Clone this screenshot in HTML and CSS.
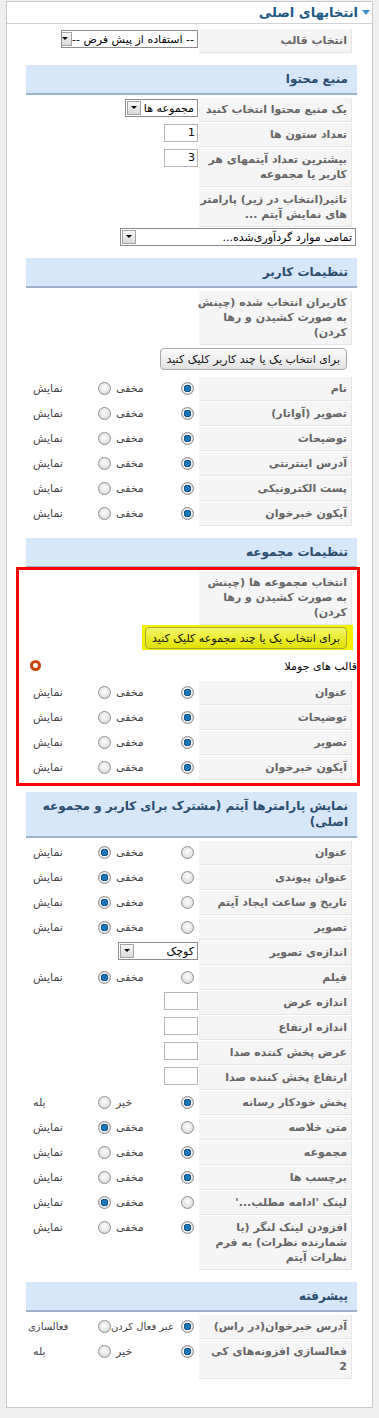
FILE: index.html
```html
<!DOCTYPE html>
<html dir="rtl">
<head>
<meta charset="utf-8">
<title>انتخابهای اصلی</title>
<link rel="stylesheet" href="styles.css">
</head>
<body>
<div class="panel">
    <div class="panel-head"><span class="tri"></span><span class="panel-title">انتخابهای اصلی</span></div>
    <div class="panel-body">

        <div class="params">
            <div class="row">
                <div class="key">انتخاب قالب</div>
                <div class="val"><div class="select" style="width:137px">-- استفاده از پیش فرض --<span class="arrow"></span></div></div>
            </div>
        </div>

        <!-- منبع محتوا -->
        <div class="section">
            <div class="section-head">منبع محتوا</div>
            <div class="params">
                <div class="row">
                    <div class="key">یک منبع محتوا انتخاب کنید</div>
                    <div class="val"><div class="select" style="width:73px">مجموعه ها<span class="arrow"></span></div></div>
                </div>
                <div class="row">
                    <div class="key">تعداد ستون ها</div>
                    <div class="val"><div class="text-input">1</div></div>
                </div>
                <div class="row">
                    <div class="key">بیشترین تعداد آیتمهای هر<br>کاربر یا مجموعه</div>
                    <div class="val"><div class="text-input">3</div></div>
                </div>
                <div class="row">
                    <div class="key">تاثیر(انتخاب در زیر) پارامتر<br>های نمایش آیتم ...</div>
                    <div class="val"></div>
                </div>
                <div class="row full">
                    <div class="select" style="width:236px">تمامی موارد گردآوری‌شده...<span class="arrow"></span></div>
                </div>
            </div>
        </div>

        <!-- تنظیمات کاربر -->
        <div class="section">
            <div class="section-head">تنظیمات کاربر</div>
            <div class="params">
                <div class="row">
                    <div class="key">کاربران انتخاب شده (چینش<br>به صورت کشیدن و رها<br>کردن)</div>
                    <div class="val"></div>
                </div>
                <div class="row btn-row">
                    <button class="btn">برای انتخاب یک یا چند کاربر کلیک کنید</button>
                </div>
                <div class="row">
                    <div class="key">نام</div>
                    <div class="val"><div class="choice"><span class="radio on"></span><span class="opt">مخفی</span><span class="radio"></span><span class="opt">نمایش</span></div></div>
                </div>
                <div class="row">
                    <div class="key">تصویر (آواتار)</div>
                    <div class="val"><div class="choice"><span class="radio on"></span><span class="opt">مخفی</span><span class="radio"></span><span class="opt">نمایش</span></div></div>
                </div>
                <div class="row">
                    <div class="key">توضیحات</div>
                    <div class="val"><div class="choice"><span class="radio on"></span><span class="opt">مخفی</span><span class="radio"></span><span class="opt">نمایش</span></div></div>
                </div>
                <div class="row">
                    <div class="key">آدرس اینترنتی</div>
                    <div class="val"><div class="choice"><span class="radio on"></span><span class="opt">مخفی</span><span class="radio"></span><span class="opt">نمایش</span></div></div>
                </div>
                <div class="row">
                    <div class="key">پست الکترونیکی</div>
                    <div class="val"><div class="choice"><span class="radio on"></span><span class="opt">مخفی</span><span class="radio"></span><span class="opt">نمایش</span></div></div>
                </div>
                <div class="row">
                    <div class="key">آیکون خبرخوان</div>
                    <div class="val"><div class="choice"><span class="radio on"></span><span class="opt">مخفی</span><span class="radio"></span><span class="opt">نمایش</span></div></div>
                </div>
            </div>
        </div>

        <!-- تنظیمات مجموعه -->
        <div class="section">
            <div class="section-head">تنظیمات مجموعه</div>
            <div class="params marked">
                <div class="row">
                    <div class="key">انتخاب مجموعه ها (چینش<br>به صورت کشیدن و رها<br>کردن)</div>
                    <div class="val"></div>
                </div>
                <div class="row btn-row hl-row">
                    <span class="highlight"><button class="btn btn-hl">برای انتخاب یک یا چند مجموعه کلیک کنید</button></span>
                </div>
                <div class="row tpl-row">
                    <span class="tpl-name">قالب های جوملا</span>
                    <span class="ring"></span>
                </div>
                <div class="row">
                    <div class="key">عنوان</div>
                    <div class="val"><div class="choice"><span class="radio on"></span><span class="opt">مخفی</span><span class="radio"></span><span class="opt">نمایش</span></div></div>
                </div>
                <div class="row">
                    <div class="key">توضیحات</div>
                    <div class="val"><div class="choice"><span class="radio on"></span><span class="opt">مخفی</span><span class="radio"></span><span class="opt">نمایش</span></div></div>
                </div>
                <div class="row">
                    <div class="key">تصویر</div>
                    <div class="val"><div class="choice"><span class="radio on"></span><span class="opt">مخفی</span><span class="radio"></span><span class="opt">نمایش</span></div></div>
                </div>
                <div class="row">
                    <div class="key">آیکون خبرخوان</div>
                    <div class="val"><div class="choice"><span class="radio on"></span><span class="opt">مخفی</span><span class="radio"></span><span class="opt">نمایش</span></div></div>
                </div>
            </div>
        </div>

        <!-- نمایش پارامترها -->
        <div class="section">
            <div class="section-head">نمایش پارامترها آیتم (مشترک برای کاربر و مجموعه<br>اصلی)</div>
            <div class="params">
                <div class="row">
                    <div class="key">عنوان</div>
                    <div class="val"><div class="choice"><span class="radio"></span><span class="opt">مخفی</span><span class="radio on"></span><span class="opt">نمایش</span></div></div>
                </div>
                <div class="row">
                    <div class="key">عنوان پیوندی</div>
                    <div class="val"><div class="choice"><span class="radio"></span><span class="opt">مخفی</span><span class="radio on"></span><span class="opt">نمایش</span></div></div>
                </div>
                <div class="row">
                    <div class="key">تاریخ و ساعت ایجاد آیتم</div>
                    <div class="val"><div class="choice"><span class="radio"></span><span class="opt">مخفی</span><span class="radio on"></span><span class="opt">نمایش</span></div></div>
                </div>
                <div class="row">
                    <div class="key">تصویر</div>
                    <div class="val"><div class="choice"><span class="radio"></span><span class="opt">مخفی</span><span class="radio on"></span><span class="opt">نمایش</span></div></div>
                </div>
                <div class="row">
                    <div class="key">اندازه‌ی تصویر</div>
                    <div class="val"><div class="select" style="width:80px">کوچک<span class="arrow"></span></div></div>
                </div>
                <div class="row">
                    <div class="key">فیلم</div>
                    <div class="val"><div class="choice"><span class="radio"></span><span class="opt">مخفی</span><span class="radio on"></span><span class="opt">نمایش</span></div></div>
                </div>
                <div class="row">
                    <div class="key">اندازه عرض</div>
                    <div class="val"><div class="text-input"></div></div>
                </div>
                <div class="row">
                    <div class="key">اندازه ارتفاع</div>
                    <div class="val"><div class="text-input"></div></div>
                </div>
                <div class="row">
                    <div class="key">عرض پخش کننده صدا</div>
                    <div class="val"><div class="text-input"></div></div>
                </div>
                <div class="row">
                    <div class="key">ارتفاع پخش کننده صدا</div>
                    <div class="val"><div class="text-input"></div></div>
                </div>
                <div class="row">
                    <div class="key">پخش خودکار رسانه</div>
                    <div class="val"><div class="choice"><span class="radio on"></span><span class="opt">خیر</span><span class="radio"></span><span class="opt">بله</span></div></div>
                </div>
                <div class="row">
                    <div class="key">متن خلاصه</div>
                    <div class="val"><div class="choice"><span class="radio"></span><span class="opt">مخفی</span><span class="radio on"></span><span class="opt">نمایش</span></div></div>
                </div>
                <div class="row">
                    <div class="key">مجموعه</div>
                    <div class="val"><div class="choice"><span class="radio on"></span><span class="opt">مخفی</span><span class="radio"></span><span class="opt">نمایش</span></div></div>
                </div>
                <div class="row">
                    <div class="key">برچسب ها</div>
                    <div class="val"><div class="choice"><span class="radio on"></span><span class="opt">مخفی</span><span class="radio"></span><span class="opt">نمایش</span></div></div>
                </div>
                <div class="row">
                    <div class="key">لینک 'ادامه مطلب...'</div>
                    <div class="val"><div class="choice"><span class="radio"></span><span class="opt">مخفی</span><span class="radio on"></span><span class="opt">نمایش</span></div></div>
                </div>
                <div class="row">
                    <div class="key">افزودن لینک لنگر (با<br>شمارنده نظرات) به فرم<br>نظرات آیتم</div>
                    <div class="val"><div class="choice"><span class="radio on"></span><span class="opt">مخفی</span><span class="radio"></span><span class="opt">نمایش</span></div></div>
                </div>
            </div>
        </div>

        <!-- پیشرفته -->
        <div class="section">
            <div class="section-head">پیشرفته</div>
            <div class="params">
                <div class="row">
                    <div class="key">آدرس خبرخوان(در راس)</div>
                    <div class="val"><div class="choice tight"><span class="radio on"></span><span class="opt">غیر فعال کردن</span><span class="radio"></span><span class="opt">فعالسازی</span></div></div>
                </div>
                <div class="row">
                    <div class="key">فعالسازی افزونه‌های کی<br>2</div>
                    <div class="val"><div class="choice"><span class="radio on"></span><span class="opt">خیر</span><span class="radio"></span><span class="opt">بله</span></div></div>
                </div>
            </div>
        </div>

    </div>
</div>
</body>
</html>
```
FILE: styles.css
```css
body {
    margin: 0;
    background-color: #efefef;
    font-family: "DejaVu Sans", sans-serif;
    font-size: 11px;
    color: #333;
}

.panel {
    margin: 1px 6px 0 6px;
    background-color: #fff;
    border: 1px solid #c9c9c9;
}

.panel-head {
    height: 21px;
    border-bottom: 1px solid #d2d2d2;
    display: flex;
    align-items: center;
    padding-right: 2px;
}

.tri {
    width: 0;
    height: 0;
    border-left: 4px solid transparent;
    border-right: 4px solid transparent;
    border-top: 5px solid #3b8fd0;
    margin-left: 4px;
}

.panel-title {
    font-size: 13px;
    font-weight: bold;
    color: #1a5884;
}

.panel-body {
    padding: 5px 15px 27px 19px;
}

.section {
    margin-top: 12px;
}

.section-head {
    background-color: #d6e7f9;
    border-bottom: 2px solid #9db2cb;
    padding: 6px 9px;
    line-height: 16px;
    font-size: 12px;
    font-weight: bold;
    color: #2a4d70;
}

.section .params {
    padding-top: 3px;
}

.row {
    display: flex;
    margin-bottom: 1px;
}

.key {
    width: 153px;
    box-sizing: border-box;
    margin-right: 5px;
    padding: 4px 4px 4px 2px;
    line-height: 15px;
    background-color: #f5f5f5;
    border-right: 1px solid #e6e6e6;
    border-bottom: 1px solid #e6e6e6;
    font-weight: bold;
    color: #666;
    white-space: nowrap;
    letter-spacing: -0.1px;
}

.val {
    flex: 1;
    padding: 1px 1px 0 0;
}

.select {
    display: flex;
    justify-content: space-between;
    align-items: center;
    box-sizing: border-box;
    height: 18px;
    border: 1px solid #8c8c8c;
    background-color: #fff;
    padding-right: 3px;
    color: #000;
    white-space: nowrap;
    overflow: hidden;
}

.arrow {
    width: 14px;
    height: 14px;
    margin-left: 1px;
    box-sizing: border-box;
    border: 1px solid #a4a4a4;
    background: linear-gradient(#f6f6f6, #d9d9d9);
    position: relative;
    flex-shrink: 0;
}

.arrow::after {
    content: "";
    position: absolute;
    left: 3px;
    top: 4px;
    border-left: 3px solid transparent;
    border-right: 3px solid transparent;
    border-top: 3px solid #000;
}

.text-input {
    width: 34px;
    height: 18px;
    box-sizing: border-box;
    border: 1px solid #b5b5b5;
    background-color: #fff;
    padding-right: 2px;
    line-height: 16px;
    color: #000;
}

.row.full {
    margin-right: 1px;
}

.btn-row {
    padding: 2px 10px 6px 0;
}

.btn {
    height: 22px;
    padding: 0 6px;
    border: 1px solid #a9a9a9;
    border-radius: 4px;
    background: linear-gradient(#fcfcfc, #e2e2e2);
    font-family: "DejaVu Sans", sans-serif;
    font-size: 11px;
    color: #111;
}

.hl-row {
    margin-top: -1px;
    padding: 0 4px 5px 0;
}

.highlight {
    display: inline-block;
    background-color: #f2f200;
    padding: 2px 6px 1px 3px;
}

.btn-hl {
    background: linear-gradient(#f7f76a, #e0e000);
    border-color: #a9a930;
}

.tpl-row {
    justify-content: space-between;
    padding: 3px 0 0 4px;
    height: 21px;
}

.tpl-name {
    line-height: 15px;
    color: #000;
}

.ring {
    width: 11px;
    height: 11px;
    box-sizing: border-box;
    border-radius: 50%;
    border: 3px solid #c9430d;
    background-color: #fff;
    margin-top: 1px;
}

.choice {
    display: flex;
    align-items: center;
    padding-top: 4px;
}

.radio {
    width: 13px;
    height: 13px;
    box-sizing: border-box;
    border-radius: 50%;
    border: 1px solid #8d8d8d;
    background: radial-gradient(circle at 50% 40%, #fdfdfd, #d3d3d3);
    flex-shrink: 0;
}

.radio:first-child {
    margin-right: 4px;
}

.radio.on {
    background: radial-gradient(circle, #0f5d9c 0, #1b86cf 2px, #0a3f6e 3.5px, #f4f4f4 4px, #cfcfcf 6px);
}

.opt {
    width: 70px;
    box-sizing: border-box;
    padding-left: 5px;
    text-align: left;
    line-height: 13px;
    color: #444;
    white-space: nowrap;
}

.choice.tight .opt {
    padding-left: 0;
    font-size: 10px;
    letter-spacing: -0.2px;
}

.marked {
    position: relative;
}

.marked::after {
    content: "";
    position: absolute;
    top: -1px;
    right: -3px;
    bottom: -6px;
    left: -10px;
    border: 3px solid #f00;
    pointer-events: none;
}
```
